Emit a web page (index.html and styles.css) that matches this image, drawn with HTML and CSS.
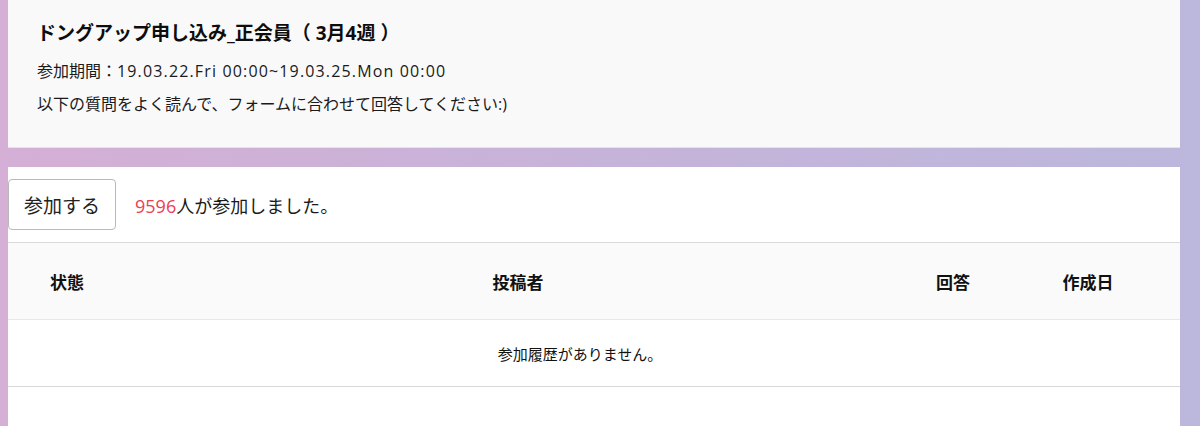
FILE: index.html
```html
<!DOCTYPE html>
<html lang="ja">
<head>
<meta charset="utf-8">
<title>ドングアップ申し込み</title>
<link rel="stylesheet" href="styles.css">
</head>
<body>
<div class="page">
  <section class="card info">
    <h1 class="title">ドングアップ申し込み_正会員（ 3月4週 ）</h1>
    <p class="line">参加期間：<span class="latin">19.03.22.Fri 00:00~19.03.25.Mon 00:00</span></p>
    <p class="line">以下の質問をよく読んで、フォームに合わせて回答してください:)</p>
  </section>
  <section class="card entries">
    <div class="actions">
      <button class="join">参加する</button>
      <span class="count"><span class="num">9596</span>人が参加しました。</span>
    </div>
    <div class="table">
      <div class="row head">
        <div class="cell">状態</div>
        <div class="cell">投稿者</div>
        <div class="cell">回答</div>
        <div class="cell">作成日</div>
      </div>
      <div class="row empty">
        <div class="cell full">参加履歴がありません。</div>
      </div>
    </div>
  </section>
</div>
</body>
</html>
```

FILE: styles.css
```css
html, body {
  margin: 0;
  padding: 0;
}
body {
  width: 1200px;
  height: 426px;
  overflow: hidden;
  background: linear-gradient(to right, #d5afd5 0%, #c6b3d9 50%, #bcb7dc 100%);
  font-family: "Open Sans", "Noto Sans CJK JP", sans-serif;
  color: #111;
}
.page {
  padding: 0 20px 0 8px;
  display: flex;
  flex-direction: column;
  gap: 19px;
}
.card {
  box-sizing: border-box;
}
.info {
  background: #f9f9f9;
  border-bottom: 1px solid #e4e4e4;
  padding: 21px 29px 31px;
  height: 148px;
}
.title {
  margin: 0 0 14px;
  font-size: 19px;
  line-height: 24px;
  font-weight: 700;
  color: #0d0d0d;
}
.line {
  margin: 0 0 9px;
  font-size: 16px;
  line-height: 24px;
  color: #1a1a1a;
}
.latin {
  letter-spacing: 1.15px;
}
.entries {
  background: #fff;
  height: 280px;
}
.actions {
  display: flex;
  align-items: center;
  padding: 12px 0 12px;
}
.join {
  box-sizing: border-box;
  width: 108px;
  height: 51px;
  padding: 0;
  border: 1px solid #b9b9b9;
  border-radius: 4px;
  background: #fff;
  font-family: inherit;
  font-size: 19px;
  color: #222;
}
.count {
  margin-left: 19px;
  font-size: 18px;
  color: #1a1a1a;
}
.num {
  color: #ec4050;
}
.table {
  border-top: 1px solid #dadada;
}
.row {
  display: grid;
  grid-template-columns: 118px 784px 86px 184px;
  align-items: center;
  border-bottom: 1px solid #e2e2e2;
}
.head {
  height: 76px;
  background: #fafafa;
  font-weight: 700;
  font-size: 17px;
  border-bottom-color: #e8e8e8;
}
.cell {
  text-align: center;
}
.empty {
  height: 66px;
  border-bottom-color: #d8d8d8;
  font-size: 15px;
}
.full {
  grid-column: 1 / -1;
  padding-right: 28px;
}
```
